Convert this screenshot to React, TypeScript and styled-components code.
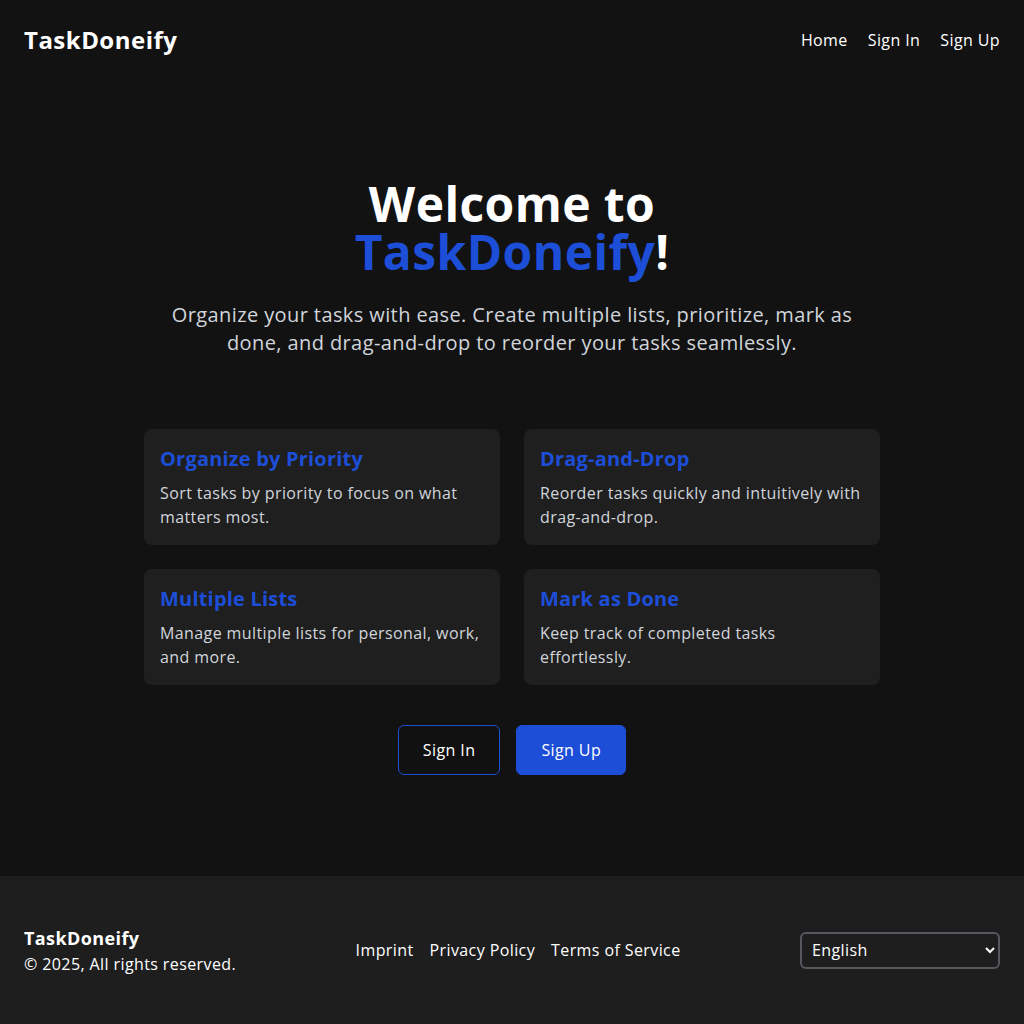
import React from "react";
import styled, { createGlobalStyle } from "styled-components";

const FONT = `"Open Sans", "Noto Sans", sans-serif`;
const BLUE = "#1d4ed8";

const Global = createGlobalStyle`
  html, body { margin: 0; padding: 0; background: #121212; }
  body { font-family: ${FONT}; color: #ffffff; letter-spacing: 0.025em; }
  * { box-sizing: border-box; }
`;

const Page = styled.div`
  min-height: 100vh;
  display: flex;
  flex-direction: column;
  background: #121212;
`;

const Header = styled.header`
  height: 80px;
  padding: 0 24px;
  display: flex;
  align-items: center;
  justify-content: space-between;
`;

const Logo = styled.div`
  font-size: 24px;
  font-weight: 700;
  line-height: 32px;
  letter-spacing: 0.02em;
  color: #ffffff;
`;

const Nav = styled.nav`
  display: flex;
  gap: 20px;
`;

const NavLink = styled.a`
  font-size: 16px;
  line-height: 24px;
  color: #ffffff;
  text-decoration: none;
`;

const Main = styled.main`
  flex: 1;
  display: flex;
  flex-direction: column;
  align-items: center;
  padding: 100px 24px 100px;
`;

const Title = styled.h1`
  margin: 0 0 25px;
  font-size: 48px;
  line-height: 48px;
  font-weight: 700;
  text-align: center;
  color: #ffffff;
`;

const Accent = styled.span`
  color: ${BLUE};
`;

const Lead = styled.p`
  margin: 0 0 72px;
  max-width: 700px;
  font-size: 20px;
  line-height: 28px;
  text-align: center;
  color: #d1d5db;
`;

const Grid = styled.div`
  width: 736px;
  display: grid;
  grid-template-columns: 1fr 1fr;
  gap: 24px;
  margin-bottom: 40px;
`;

const Card = styled.div`
  background: #1f1f1f;
  border-radius: 8px;
  padding: 16px;
  min-height: 116px;
`;

const CardTitle = styled.h3`
  margin: 0 0 8px;
  font-size: 20px;
  line-height: 28px;
  font-weight: 700;
  letter-spacing: 0.01em;
  color: ${BLUE};
`;

const CardText = styled.p`
  margin: 0;
  font-size: 16px;
  line-height: 24px;
  color: #d1d5db;
`;

const Actions = styled.div`
  display: flex;
  gap: 16px;
`;

const Button = styled.a<{ $primary?: boolean }>`
  display: inline-flex;
  align-items: center;
  justify-content: center;
  height: 50px;
  padding: 0 24px;
  border-radius: 6px;
  font-size: 16px;
  line-height: 24px;
  text-decoration: none;
  color: #ffffff;
  border: 1px solid ${BLUE};
  background: ${(p) => (p.$primary ? BLUE : "#111111")};
`;

const Footer = styled.footer`
  background: #1e1e1e;
  padding: 48px 24px;
  display: flex;
  align-items: center;
  justify-content: space-between;
`;

const FooterBrand = styled.div`
  display: flex;
  flex-direction: column;
`;

const FooterName = styled.div`
  font-size: 18px;
  line-height: 28px;
  font-weight: 700;
  color: #ffffff;
`;

const Copy = styled.div`
  font-size: 16px;
  line-height: 24px;
  color: #ffffff;
`;

const FooterLinks = styled.div`
  display: flex;
  gap: 16px;
`;

const FooterLink = styled.a`
  font-size: 16px;
  line-height: 24px;
  color: #ffffff;
  text-decoration: none;
`;

const Select = styled.select`
  width: 200px;
  height: 37px;
  padding: 0 6px 0 6px;
  border: 2px solid #55585e;
  border-radius: 6px;
  background: #1e1e1e;
  color: #ffffff;
  font-family: ${FONT};
  letter-spacing: 0.025em;
  font-size: 16px;
`;

const features = [
  { t: "Organize by Priority", d: "Sort tasks by priority to focus on what matters most." },
  { t: "Drag-and-Drop", d: "Reorder tasks quickly and intuitively with drag-and-drop." },
  { t: "Multiple Lists", d: "Manage multiple lists for personal, work, and more." },
  { t: "Mark as Done", d: "Keep track of completed tasks effortlessly." },
];

export default function App() {
  return (
    <Page>
      <Global />
      <Header>
        <Logo>TaskDoneify</Logo>
        <Nav>
          <NavLink href="#">Home</NavLink>
          <NavLink href="#">Sign In</NavLink>
          <NavLink href="#">Sign Up</NavLink>
        </Nav>
      </Header>
      <Main>
        <Title>
          Welcome to
          <br />
          <Accent>TaskDoneify</Accent>!
        </Title>
        <Lead>
          Organize your tasks with ease. Create multiple lists, prioritize, mark as done, and
          drag-and-drop to reorder your tasks seamlessly.
        </Lead>
        <Grid>
          {features.map((f) => (
            <Card key={f.t}>
              <CardTitle>{f.t}</CardTitle>
              <CardText>{f.d}</CardText>
            </Card>
          ))}
        </Grid>
        <Actions>
          <Button href="#">Sign In</Button>
          <Button href="#" $primary>
            Sign Up
          </Button>
        </Actions>
      </Main>
      <Footer>
        <FooterBrand>
          <FooterName>TaskDoneify</FooterName>
          <Copy>© 2025, All rights reserved.</Copy>
        </FooterBrand>
        <FooterLinks>
          <FooterLink href="#">Imprint</FooterLink>
          <FooterLink href="#">Privacy Policy</FooterLink>
          <FooterLink href="#">Terms of Service</FooterLink>
        </FooterLinks>
        <Select defaultValue="en">
          <option value="en">English</option>
          <option value="de">Deutsch</option>
        </Select>
      </Footer>
    </Page>
  );
}
